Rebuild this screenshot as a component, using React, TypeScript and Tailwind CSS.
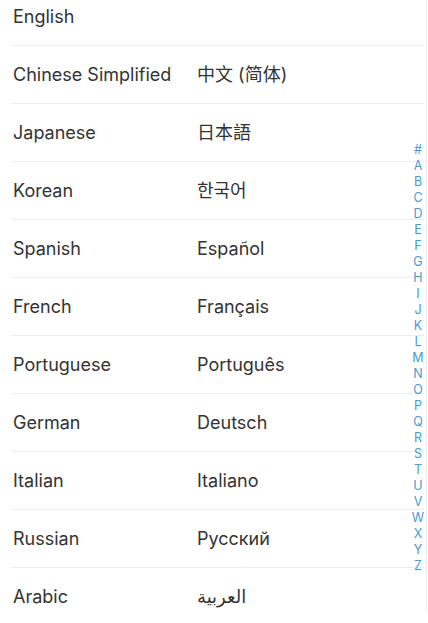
import React from "react";

const languages: { name: string; native?: string }[] = [
  { name: "English" },
  { name: "Chinese Simplified", native: "中文 (简体)" },
  { name: "Japanese", native: "日本語" },
  { name: "Korean", native: "한국어" },
  { name: "Spanish", native: "Español" },
  { name: "French", native: "Français" },
  { name: "Portuguese", native: "Português" },
  { name: "German", native: "Deutsch" },
  { name: "Italian", native: "Italiano" },
  { name: "Russian", native: "Русский" },
  { name: "Arabic", native: "العربية" },
];

const index = "#ABCDEFGHIJKLMNOPQRSTUVWXYZ".split("");

export default function App() {
  return (
    <div
      className="relative h-[623px] w-[428px] overflow-hidden bg-white"
      style={{ fontFamily: 'Inter, "Noto Sans", "Noto Sans CJK SC", "DejaVu Sans", sans-serif' }}
    >
      <div className="h-full w-[427px] border-r border-[#ececec]">
        {/* list is scrolled a little, so the first row is cut off */}
        <div className="-mt-[12px]">
          {languages.map((lang) => (
            <div
              key={lang.name}
              className="ml-[11px] mr-[2px] flex h-[58px] items-center border-b border-[#ededed] pl-[2px] text-[18px] text-[#333333]"
            >
              <span className="w-[184px] shrink-0">{lang.name}</span>
              {lang.native && <span>{lang.native}</span>}
            </div>
          ))}
        </div>
      </div>

      {/* section index */}
      <div className="absolute right-[2px] top-[142px] flex w-[16px] flex-col items-center">
        {index.map((ch) => (
          <span
            key={ch}
            className="flex h-[16px] items-center text-[12.5px] leading-none text-[#4a9ad4]"
          >
            {ch}
          </span>
        ))}
      </div>
    </div>
  );
}
